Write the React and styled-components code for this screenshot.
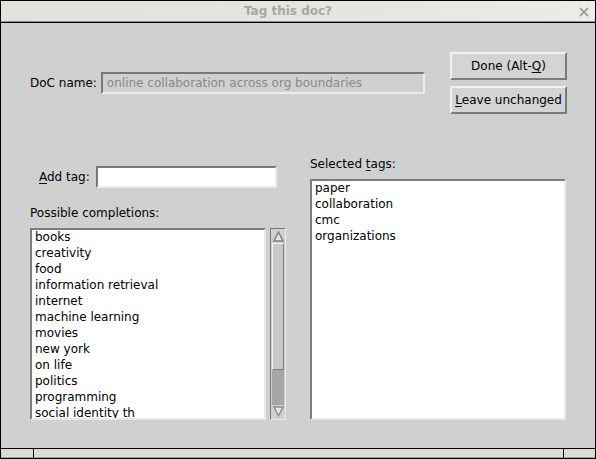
import React from "react";
import styled, { createGlobalStyle } from "styled-components";

const completions = [
	"books",
	"creativity",
	"food",
	"information retrieval",
	"internet",
	"machine learning",
	"movies",
	"new york",
	"on life",
	"politics",
	"programming",
	"social identity th",
];

const selected = ["paper", "collaboration", "cmc", "organizations"];

function App() {
	return (
		<>
			<GlobalStyle />
			<Window>
				<TitleBar>
					<Title>Tag this doc?</Title>
					<CloseIcon width='10' height='10' viewBox='0 0 10 10'>
						<path d='M1 1 L9 9 M9 1 L1 9' stroke='#a2a29e' strokeWidth='2' />
					</CloseIcon>
				</TitleBar>
				<Body>
					<TopRow>
						<FieldRow>
							<Label gap={4}>DoC name:</Label>
							<TextInput width={324} disabled>
								online collaboration across org boundaries
							</TextInput>
						</FieldRow>
						<ButtonColumn>
							<Button>
								Done (Alt-<u>Q</u>)
							</Button>
							<Button>
								<u>L</u>eave unchanged
							</Button>
						</ButtonColumn>
					</TopRow>
					<Columns>
						<LeftColumn>
							<FieldRow>
								<Label indent={9}>
									<u>A</u>dd tag:
								</Label>
								<TextInput width={181} />
							</FieldRow>
							<Caption gap={17}>Possible completions:</Caption>
							<ListRow>
								<ListBox width={236} height={192}>
									{completions.map((item) => (
										<Item key={item}>{item}</Item>
									))}
								</ListBox>
								<ScrollBar>
									<Arrow>
										<svg width='11' height='11' viewBox='0 0 11 11'>
											<polygon points='5.5,1 10,10 1,10' fill='#e4e4e4' stroke='#7c7c7c' strokeWidth='1.4' />
										</svg>
									</Arrow>
									<Thumb />
									<Trough />
									<Arrow>
										<svg width='11' height='11' viewBox='0 0 11 11'>
											<polygon points='1,1 10,1 5.5,10' fill='#e4e4e4' stroke='#8c8c8c' strokeWidth='1.4' />
										</svg>
									</Arrow>
								</ScrollBar>
							</ListRow>
						</LeftColumn>
						<RightColumn>
							<Caption>
								Selected <u>t</u>ags:
							</Caption>
							<ListBox width={256} height={241} top={7}>
								{selected.map((item) => (
									<Item key={item}>{item}</Item>
								))}
							</ListBox>
						</RightColumn>
					</Columns>
				</Body>
				<StatusBar>
					<StatusCell width={32} />
					<StatusCell grow />
					<StatusCell width={31} last />
				</StatusBar>
			</Window>
		</>
	);
}

export default App;

const GlobalStyle = createGlobalStyle`
	body {
		margin: 0;
		background: #d0d0d0;
		font-family: "DejaVu Sans", "Liberation Sans", sans-serif;
		font-size: 12px;
	}
	u {
		text-decoration-thickness: 1px;
		text-underline-offset: 2px;
	}
`;

const Window = styled.div`
	width: 596px;
	height: 459px;
	box-sizing: border-box;
	border: 1px solid #000;
	display: flex;
	flex-direction: column;
	background: #d0d0d0;
`;

const TitleBar = styled.div`
	height: 22px;
	box-sizing: border-box;
	border-bottom: 1px solid #000;
	box-shadow: inset 0 -1px 0 #8e8e8a;
	background: linear-gradient(90deg, #e2e2dc, #e6e6e0 60%, #ecece6);
	display: flex;
	align-items: center;
	position: relative;
`;

const Title = styled.div`
	flex: 1;
	text-align: center;
	padding-right: 20px;
	padding-bottom: 1px;
	font-weight: bold;
	font-size: 12px;
	color: #a6a6a2;
`;

const CloseIcon = styled.svg`
	position: absolute;
	right: 6px;
	top: 6px;
`;

const Body = styled.div`
	flex: 1;
	padding: 29px 28px 0 29px;
	display: flex;
	flex-direction: column;
`;

const TopRow = styled.div`
	display: flex;
	align-items: center;
	justify-content: space-between;
`;

const FieldRow = styled.div`
	display: flex;
	align-items: center;
`;

const Label = styled.span`
	margin-left: ${(p) => p.indent || 0}px;
	margin-right: ${(p) => p.gap || 6}px;
	color: #000;
	line-height: 16px;
`;

const TextInput = styled.div`
	width: ${(p) => p.width}px;
	height: 22px;
	box-sizing: border-box;
	border: 2px solid;
	border-color: #787878 #ececec #ececec #787878;
	background: ${(p) => (p.disabled ? "#d0d0d0" : "#fff")};
	color: #8a8a8a;
	padding: 0 4px;
	line-height: 18px;
	white-space: nowrap;
	overflow: hidden;
`;

const ButtonColumn = styled.div`
	display: flex;
	flex-direction: column;
	gap: 6px;
	width: 117px;
`;

const Button = styled.div`
	height: 28px;
	box-sizing: border-box;
	border: 2px solid;
	border-color: #f2f2f2 #7a7a7a #7a7a7a #f2f2f2;
	background: #d4d4d4;
	display: flex;
	align-items: center;
	justify-content: center;
	color: #000;
	white-space: nowrap;
`;

const Columns = styled.div`
	margin-top: 42px;
	display: grid;
	grid-template-columns: 256px 256px;
	column-gap: 24px;
`;

const LeftColumn = styled.div`
	padding-top: 10px;
	display: flex;
	flex-direction: column;
`;

const RightColumn = styled.div`
	display: flex;
	flex-direction: column;
`;

const Caption = styled.div`
	margin-top: ${(p) => p.gap || 0}px;
	line-height: 16px;
	color: #000;
`;

const ListRow = styled.div`
	margin-top: 7px;
	display: flex;
	gap: 4px;
`;

const ListBox = styled.div`
	width: ${(p) => p.width}px;
	height: ${(p) => p.height}px;
	margin-top: ${(p) => p.top || 0}px;
	box-sizing: border-box;
	border: 2px solid;
	border-color: #7c7c7c #e8e8e8 #e8e8e8 #7c7c7c;
	background: #fff;
	padding: 0 3px;
	overflow: hidden;

	& > :first-child {
		margin-top: -1px;
	}
`;

const Item = styled.div`
	line-height: 16px;
	color: #000;
	white-space: nowrap;
`;

const ScrollBar = styled.div`
	width: 16px;
	height: 192px;
	box-sizing: border-box;
	border: 1px solid;
	border-color: #7a7a7a #eaeaea #eaeaea #7a7a7a;
	background: #d0d0d0;
	padding: 1px;
	display: flex;
	flex-direction: column;
`;

const Arrow = styled.div`
	height: 13px;
	display: flex;
	align-items: center;
	justify-content: center;
`;

const Thumb = styled.div`
	height: 127px;
	box-sizing: border-box;
	border: 1px solid;
	border-color: #f4f4f4 #7e7e7e #7e7e7e #f4f4f4;
	background: #c8c8c8;
`;

const Trough = styled.div`
	flex: 1;
	background: #a6a6a6;
`;

const StatusBar = styled.div`
	height: 9px;
	border-top: 1px solid #000;
	display: flex;
`;

const StatusCell = styled.div`
	width: ${(p) => (p.width ? `${p.width}px` : "auto")};
	flex: ${(p) => (p.grow ? 1 : "none")};
	background: #dcdcd6;
	border-bottom: 1px solid #a4a49e;
	border-right: ${(p) => (p.last ? "none" : "1px solid #000")};
`;
